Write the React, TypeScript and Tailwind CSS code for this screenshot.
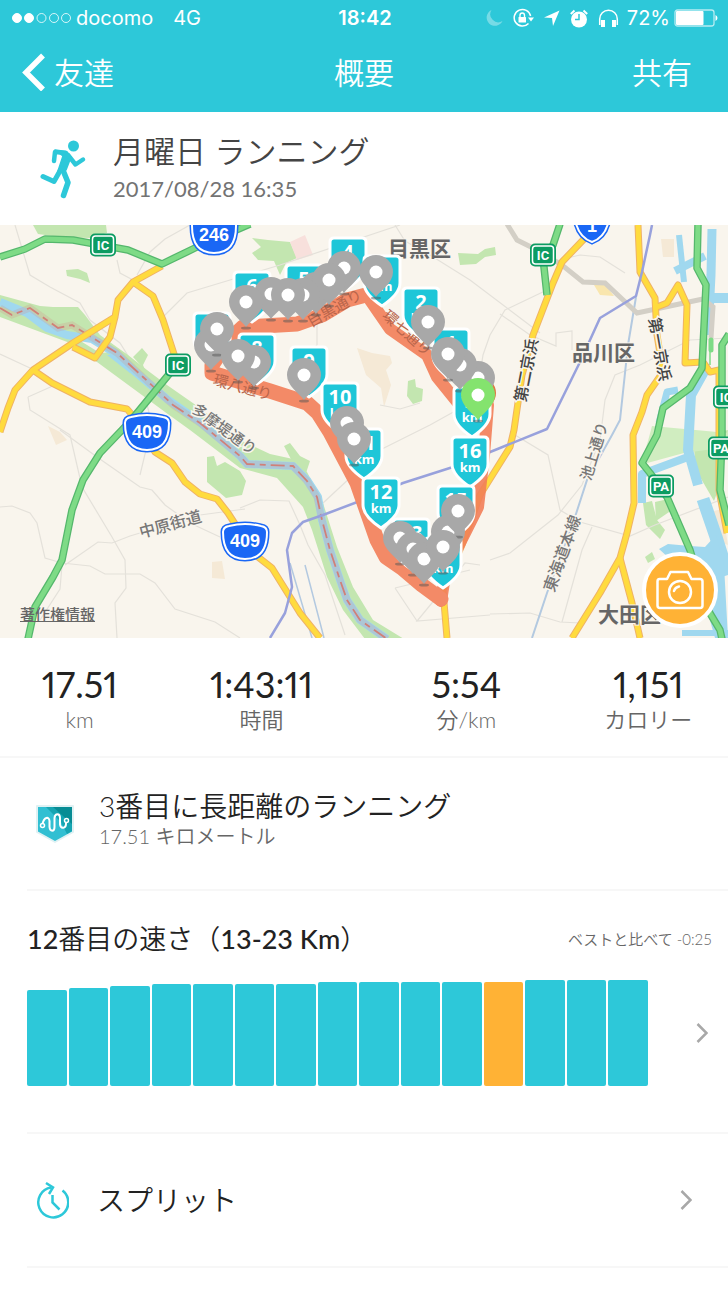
import type { ReactNode } from 'react'

interface Point {
  x: number
  y: number
}

interface KmBadge extends Point {
  km: number
}

const stats = [
  { value: '17.51', label: 'km' },
  { value: '1:43:11', label: '時間' },
  { value: '5:54', label: '分/km' },
  { value: '1,151', label: 'カロリー' },
]

// bar heights in px, the highlighted one is this run
const paceBars = [96, 98, 100, 102, 102, 102, 102, 104, 104, 104, 104, 104, 106, 106, 106]
const currentBar = 11

const kmBadges: KmBadge[] = [
  { km: 4, x: 348, y: 11 },
  { km: 3, x: 382, y: 29 },
  { km: 5, x: 304, y: 38 },
  { km: 6, x: 252, y: 45 },
  { km: 7, x: 212, y: 86 },
  { km: 8, x: 257, y: 107 },
  { km: 9, x: 309, y: 120 },
  { km: 2, x: 421, y: 61 },
  { km: 1, x: 451, y: 102 },
  { km: 17, x: 472, y: 160 },
  { km: 16, x: 470, y: 210 },
  { km: 11, x: 364, y: 202 },
  { km: 10, x: 340, y: 156 },
  { km: 12, x: 381, y: 251 },
  { km: 13, x: 411, y: 292 },
  { km: 14, x: 443, y: 311 },
  { km: 15, x: 456, y: 259 },
]

const pins: Point[] = [
  { x: 376, y: 47 },
  { x: 344, y: 43 },
  { x: 316, y: 64 },
  { x: 329, y: 55 },
  { x: 303, y: 70 },
  { x: 271, y: 69 },
  { x: 288, y: 70 },
  { x: 246, y: 77 },
  { x: 211, y: 120 },
  { x: 217, y: 104 },
  { x: 254, y: 137 },
  { x: 238, y: 131 },
  { x: 304, y: 150 },
  { x: 347, y: 198 },
  { x: 354, y: 214 },
  { x: 428, y: 97 },
  { x: 478, y: 153 },
  { x: 460, y: 140 },
  { x: 448, y: 129 },
  { x: 400, y: 313 },
  { x: 413, y: 324 },
  { x: 424, y: 334 },
  { x: 448, y: 307 },
  { x: 458, y: 286 },
  { x: 443, y: 322 },
]

const yellowRoads = [
  'M162 41 133 57 118 75 115 92 73 118 33 145 15 165 8 183 0 207',
  'M115 92 110 112 95 133 73 122',
  'M133 57 153 71 163 95 175 132',
  'M33 145 52 158 90 177 127 184 134 192 155 227 172 238 185 257 200 269 217 274 228 288 237 302 258 332 272 343 300 388 320 413',
  'M586 12 562 37 553 58 533 110 522 150 514 205 510 222 480 270 462 320 443 365 447 413',
  'M638 0 640 47 655 73 657 110 663 147 647 170 642 187 633 210 634 278 627 308 620 333 600 368 572 413',
  'M620 333 632 378 640 413',
  'M657 82 667 78 678 60 687 80 685 138 703 137 710 147 719 145 719 265 727 308',
]

const greenRoads = [
  'M0 32 25 24 45 14 73 15 128 25 162 39 197 22 250 -1',
  'M170 148 133 193 122 205 100 228 83 255 72 285 62 335 53 352 35 382 28 414',
  'M560 -1 553 20 543 33 547 70',
  'M698 -1 697 43 706 60 702 143 690 163 663 183 657 210 642 238 650 248 667 272 690 325 708 385 720 405 722 414',
  'M729 109 722 120 722 210 720 265 729 300',
]

const minorRoads = [
  'M15 0 30 50 50 62 80 78 90 95 120 118 140 150 152 200 140 250',
  'M190 0 165 14 150 27 137 50',
  'M117 35 120 48 133 55',
  'M163 92 187 68 230 55 280 40 400 0',
  'M0 129 30 143',
  'M28 172 55 160 M28 172 30 185 70 210 82 262 112 312 125 335 126 363 115 378 117 413',
  'M0 282 12 281 30 288 37 298 45 333 62 338 90 341 105 349 140 349 155 358 175 384 215 397 240 413',
  'M65 340 98 317 112 318 130 311 200 290 245 284',
  'M62 340 60 364 40 395',
  'M60 205 97 232 140 262 152 265 165 280 190 298 220 312',
  'M323 278 380 225 430 200 475 175',
  'M300 60 317 82 317 120 300 140',
  'M395 0 405 16 430 30 470 55 540 108',
  'M547 65 505 85 490 110 483 130 480 150',
  'M500 89 530 110 556 121 556 108 572 106 572 125',
  'M563 34 580 30 600 32 625 48',
  'M515 210 548 230 560 285 580 297 630 311 655 300 728 272',
  'M728 113 690 115 640 140 615 150 605 175 600 215 582 260 558 290 510 328 490 335',
  'M592 302 582 325 562 397 M490 389 530 388 560 397 580 398',
  'M380 180 400 184 420 178',
  'M480 340 465 338 417 396 490 390',
  'M395 363 417 396 M395 363 470 345',
  'M240 283 260 275 289 276 300 300 308 320 325 350 345 410',
]

const riverLine =
  'M0 77 27 88 47 103 67 110 92 114 115 128 133 145 167 174 200 197 240 231 247 239 270 240 293 241 307 255 318 272 322 295 330 325 340 355 347 375 360 395 387 414'
const borderLine =
  'M0 83 12 90 30 83 58 103 72 100 117 128 143 152 173 180 200 198 240 231 247 239 270 240 293 241 307 256 317 272 322 295 330 325 340 355 347 375 360 395 387 414'
const routeLine =
  'M366 70 347 75 322 90 297 99 243 102 228 116 212 140 212 148 270 166 307 178 318 188 330 207 357 258 377 315 386 332 402 343 422 360 441 374'
const routeBack = 'M441 376 446 345 465 308 478 282 484 230 488 180'
const routeEast = 'M370 75 390 104 427 130 437 152 458 178'

function KmMarker({ km, x, y }: KmBadge) {
  return (
    <g transform={`translate(${x} ${y})`}>
      <path
        d="M-14 2H14Q18 2 18 6V29Q18 40 0 52Q-18 40 -18 29V6Q-18 2 -14 2Z"
        fill="#1ec6d8"
        stroke="#fff"
        strokeWidth="3"
        strokeLinejoin="round"
      />
      <text y="23" textAnchor="middle" fill="#fff" className="font-['Noto_Sans',sans-serif] text-[20px] font-bold">
        {km}
      </text>
      <text y="37" textAnchor="middle" fill="#fff" className="font-['Noto_Sans',sans-serif] text-[13px] font-bold">
        km
      </text>
    </g>
  )
}

function Pin({ x, y, color = '#a8a8a8' }: Point & { color?: string }) {
  return (
    <g transform={`translate(${x} ${y})`}>
      <ellipse cy="26" rx="5" ry="1.5" fill="#555" opacity="0.5" />
      <path d="M0 25C-5 18-17 11-17 0A17 17 0 0 1 17 0C17 11 5 18 0 25Z" fill={color} />
      <circle r="6.5" fill="#fff" />
    </g>
  )
}

function ExitSign({ x, y, text }: Point & { text: string }) {
  return (
    <g transform={`translate(${x} ${y})`}>
      <rect x="-13" y="-11.5" width="26" height="23" rx="5" fill="#0c9c62" />
      <rect x="-10.5" y="-9" width="21" height="18" rx="3" fill="#0c9c62" stroke="#fff" strokeWidth="1.5" />
      <text y="5" textAnchor="middle" fill="#fff" className="font-['Roboto',sans-serif] text-[13px] font-bold">
        {text}
      </text>
    </g>
  )
}

function RouteShield({ x, y, text }: Point & { text: string }) {
  const shape = 'M-22 -10Q-22 -15 -16 -16Q0 -20 16 -16Q22 -15 22 -10Q22 17 0 17Q-22 17 -22 -10Z'
  return (
    <g transform={`translate(${x} ${y})`}>
      <path d={shape} fill="#1a67f5" stroke="#1a67f5" strokeWidth="5" />
      <path d={shape} fill="#1a67f5" stroke="#fff" strokeWidth="2" />
      <text y="5" textAnchor="middle" fill="#fff" className="font-['Liberation_Sans',sans-serif] text-[18px] font-bold">
        {text}
      </text>
    </g>
  )
}

function StreetName({ x, y, angle, size = 15, dark, children }: Point & { angle: number; size?: number; dark?: boolean; children: ReactNode }) {
  return (
    <text
      transform={`translate(${x} ${y}) rotate(${angle})`}
      textAnchor="middle"
      dominantBaseline="central"
      fontSize={size}
      fill={dark ? '#444' : '#777'}
      stroke="#f9f5ed"
      strokeWidth="3"
      paintOrder="stroke"
      className="font-medium"
    >
      {children}
    </text>
  )
}

function RouteMap() {
  return (
    <svg viewBox="0 0 728 413" className="block w-full bg-[#f9f5ed]" role="img" aria-label="ルート">
      {/* parks and blocks */}
      <g fill="#c3e6b0">
        <path d="M33 0 38 9 60 12 90 13 107 8 106 0Z" />
        <path d="M66 45 78 44 87 48 90 58 80 54 67 51Z" />
        <path d="M252 13 268 15 290 17 297 33 286 38 280 50 274 36 258 35 252 28 261 22Z" />
        <path d="M458 28 478 29 485 24 495 22 496 30 485 32 476 39 460 40Z" />
        <path d="M408 156 415 154 416 162 423 164 422 176 413 179 407 171Z" />
        <path d="M133 132 142 123 148 130 143 140 145 145Z" />
        <path d="M207 232 214 231 217 241 225 237 240 246 246 256 242 270 226 273 207 257Z" />
        <path d="M284 221 290 218 300 231 310 236 306 248 293 238Z" />
        <path d="M643 278 652 276 657 295 665 305 660 314 646 300Z" />
        <path d="M655 277 668 274 672 285 656 296Z" />
        <path d="M645 332 652 327 655 334 648 338Z" />
        <path d="M693 213 728 205 722 255 714 276 707 264 696 245Z" />
      </g>
      <path d="M652 201 728 208 728 222 684 228 640 240 648 216Z" fill="#d0edc0" />
      <g fill="#f5e9d6">
        <path d="M357 123 372 128 390 131 392 138 386 145 391 160 384 182 381 163 366 150Z" />
        <path d="M212 337 222 336 225 354 212 353Z" />
        <path d="M48 201 60 207 67 215 56 220Z" />
        <path d="M661 14H674V32H663Z" />
        <path d="M594 60 604 58 614 71 600 70Z" fill="#f9e6ae" />
        <path d="M714 286 722 284 728 320 714 315Z" />
      </g>
      <path d="M290 17 305 10 313 30 297 35Z" fill="#f8e0dc" />

      <g fill="none" stroke="#e4e1da" strokeWidth="1.2">
        {minorRoads.map((d) => (
          <path key={d} d={d} />
        ))}
      </g>

      {/* canals and the bay */}
      <g fill="none" stroke="#a0d8ef" strokeLinejoin="round">
        <path d="M679 10 684 57" strokeWidth="6" />
        <path d="M675 46 705 31" strokeWidth="8" />
        <path d="M708 110 711 50 712 4" strokeWidth="9" />
        <path d="M714 73H728" strokeWidth="10" />
        <path d="M706 143 691 170 688 225 698 260" strokeWidth="10" />
        <path d="M678 165 667 167 659 198" strokeWidth="7" />
        <path d="M688 232 642 249 642 278" strokeWidth="8" />
        <path d="M703 274 716 312 728 350" strokeWidth="13" />
      </g>
      <path d="M659 324 668 319 690 321 705 322 716 310 724 340 728 413 715 413 700 360 670 334Z" fill="#a0d8ef" />
      <path d="M682 405H728V411H682Z" fill="#a0d8ef" />

      {/* river */}
      <path
        d="M0 70 40 81 53 82 78 82 85 90 100 110 128 130 147 145 167 160 200 183 240 215 270 229 293 234 307 247 323 278 337 322 353 362 373 395 404 414 365 414 343 385 327 352 312 305 303 282 277 253 240 243 190 205 165 187 97 137 70 118 0 92Z"
        fill="#c3e6b0"
      />
      <path d="M74 112 90 114 112 127 100 128Z" fill="#f9f5ed" />
      <path d={riverLine} fill="none" stroke="#a0d8ef" strokeWidth="8" strokeLinejoin="round" />
      <path d="M107 130 120 130 137 146 130 148Z" fill="#a0d8ef" />
      <path d={borderLine} fill="none" stroke="#d58f88" strokeOpacity="0.25" strokeWidth="7" />
      <path d={borderLine} fill="none" stroke="#d08078" strokeWidth="1.8" strokeDasharray="14 5 6 5" />

      {/* railways */}
      <path d="M636 72 628 120 620 195 612 210 587 255 575 292 547 368 532 413" fill="none" stroke="#b3c9e0" strokeWidth="2" />
      <path d="M290 338 312 413M305 340 324 413" fill="none" stroke="#b3c9e0" strokeWidth="1.5" />
      <path d="M507 -1 517 15 537 25 562 40 583 57 605 58 637 88 703 74 713 82 711 113" fill="none" stroke="#d3cfc6" strokeWidth="5" />

      <g fill="none" strokeLinejoin="round">
        {yellowRoads.map((d) => (
          <path key={d} d={d} stroke="#efb266" strokeWidth="7" />
        ))}
        {yellowRoads.map((d) => (
          <path key={d} d={d} stroke="#ffdb3e" strokeWidth="5" />
        ))}
        {greenRoads.map((d) => (
          <path key={d} d={d} stroke="#55b76c" strokeWidth="7.5" />
        ))}
        {greenRoads.map((d) => (
          <path key={d} d={d} stroke="#7edb86" strokeWidth="5" />
        ))}
        <path d="M711 115V125" stroke="#7edb86" strokeWidth="5" strokeLinecap="round" />
        <path d="M710 125V140" stroke="#7edb86" strokeWidth="1.5" />
        <path
          d="M270 413 285 388 292 362 287 325 292 308 303 297 323 290 360 276 403 258 453 242 500 223 547 204 580 137 600 93 636 71 642 47 650 10 652 0"
          stroke="#98a1dc"
          strokeWidth="2.5"
        />
      </g>

      <path d={routeBack} fill="none" stroke="#f27e58" strokeOpacity="0.9" strokeWidth="12" strokeLinejoin="round" strokeLinecap="round" />
      <path d={routeLine} fill="none" stroke="#f38a67" strokeWidth="15" strokeLinejoin="round" strokeLinecap="round" />
      <path d={routeEast} fill="none" stroke="#f38a67" strokeWidth="12" strokeLinejoin="round" strokeLinecap="round" />
      <circle cx="480" cy="168" r="16" fill="#dd7a45" />

      <g fill="#b8654b" textAnchor="middle" dominantBaseline="central" fontSize="15">
        <text transform="translate(334 82) rotate(-30)">目黒通り</text>
        <text transform="translate(408 107) rotate(42)">環七通り</text>
        <text transform="translate(243 161) rotate(15)">環八通り</text>
      </g>
      <StreetName x={225} y={203} angle={36}>多摩堤通り</StreetName>
      <StreetName x={170} y={298} angle={-15} size={16}>中原街道</StreetName>
      <StreetName x={593} y={226} angle={-73}>池上通り</StreetName>
      <StreetName x={561} y={328} angle={-70} size={16}>東海道本線</StreetName>
      <StreetName x={525} y={145} angle={-79} size={16} dark>第二京浜</StreetName>
      <StreetName x={661} y={124} angle={80} size={16} dark>第一京浜</StreetName>

      <g fill="#666" stroke="#f9f5ed" strokeWidth="2" paintOrder="stroke" fontSize="21" fontWeight="700">
        <text x="388" y="31">目黒区</text>
        <text x="572" y="135">品川区</text>
        <text x="598" y="397">大田区</text>
      </g>

      <ExitSign x={103} y={20} text="IC" />
      <ExitSign x={178} y={140} text="IC" />
      <ExitSign x={543} y={30} text="IC" />
      <ExitSign x={726} y={172} text="IC" />
      <ExitSign x={721} y={223} text="PA" />
      <ExitSign x={661} y={261} text="PA" />
      <RouteShield x={214} y={11} text="246" />
      <RouteShield x={147} y={208} text="409" />
      <RouteShield x={245} y={317} text="409" />
      <g transform="translate(592 0)">
        <path d="M-17 -6Q-14 12 0 17Q14 12 17 -6Z" fill="#1a67f5" stroke="#1a67f5" strokeWidth="5" />
        <path d="M-17 -6Q-14 12 0 17Q14 12 17 -6Z" fill="#1a67f5" stroke="#fff" strokeWidth="2" />
        <text y="7" textAnchor="middle" fill="#fff" className="font-['Liberation_Sans',sans-serif] text-[18px] font-bold">
          1
        </text>
      </g>

      {kmBadges.map((badge) => (
        <KmMarker key={badge.km} {...badge} />
      ))}
      {pins.map((pin) => (
        <Pin key={`${pin.x}-${pin.y}`} {...pin} />
      ))}
      <Pin x={478} y={170} color="#84e36e" />
    </svg>
  )
}

function StatusBar() {
  return (
    <div className="grid h-9 grid-cols-[1fr_auto_1fr] items-center pr-2.5 pl-3 font-['Inter',sans-serif] text-[20px]">
      <div className="flex items-center">
        <svg width="60" height="12" viewBox="0 0 60 12" fill="none" stroke="#fff" aria-hidden="true">
          <circle cx="5" cy="6" r="4.5" fill="#fff" />
          <circle cx="17" cy="6" r="4.5" fill="#fff" />
          <circle cx="29.5" cy="6" r="4.5" strokeWidth="0.8" />
          <circle cx="42" cy="6" r="4.5" strokeWidth="0.8" />
          <circle cx="54" cy="6" r="4.5" strokeWidth="0.8" />
        </svg>
        <span className="ml-1">docomo</span>
        <span className="ml-5">4G</span>
      </div>
      <span className="font-semibold">18:42</span>
      <div className="flex items-center justify-end">
        <svg width="17" height="18" viewBox="0 0 17 18" fill="#fff" opacity="0.35" aria-hidden="true">
          <path d="M5.500 1A8.300 8.300 0 1 0 16.500 12A8 8 0 0 1 5.500 1Z" />
        </svg>
        <svg width="21" height="20" viewBox="0 0 21 20" className="ml-2.5" fill="none" aria-hidden="true">
          <path d="M17.600 8A8.300 8.300 0 1 0 15.500 15.500" stroke="#fff" strokeWidth="1.500" />
          <path d="M15 9.500H21L18 13.500Z" fill="#fff" />
          <rect x="5.500" y="9" width="7.500" height="5.500" rx="0.500" fill="#fff" />
          <path d="M7 9V7.300A2.200 2.200 0 0 1 11.500 7.300V9" stroke="#fff" strokeWidth="1.400" />
        </svg>
        <svg width="16" height="16" viewBox="0 0 16 16" className="ml-2.5" fill="#fff" aria-hidden="true">
          <path d="M15.500 0.500 9 16 8 8 0 7.500Z" />
        </svg>
        <svg width="18" height="19" viewBox="0 0 18 19" className="ml-2.5" fill="none" aria-hidden="true">
          <circle cx="9" cy="10.500" r="8" fill="#fff" />
          <path d="M9 5V10.500H5" stroke="#2dc8d9" strokeWidth="1.500" />
          <path d="M0.800 5 4.500 1.600M17.200 5 13.500 1.600" stroke="#fff" strokeWidth="2" />
        </svg>
        <svg width="21" height="19" viewBox="0 0 21 19" className="ml-2.5" fill="none" stroke="#fff" aria-hidden="true">
          <path d="M1.700 16V10A8.800 8.800 0 0 1 19.300 10V16" strokeWidth="1.500" />
          <rect x="3.500" y="11.500" width="3" height="6" fill="#fff" />
          <rect x="14.500" y="11.500" width="3" height="6" fill="#fff" />
        </svg>
        <span className="ml-2">72%</span>
        <svg width="44" height="18" viewBox="0 0 44 18" className="ml-1" fill="none" aria-hidden="true">
          <rect x="1" y="1" width="39" height="16" rx="2.500" stroke="#fff" strokeOpacity="0.65" strokeWidth="1.300" />
          <rect x="2" y="2" width="27.500" height="14" rx="1" fill="#fff" />
          <path d="M41.500 6Q43.500 7 43.500 9T41.500 12Z" fill="#fff" />
        </svg>
      </div>
    </div>
  )
}

function Chevron() {
  return (
    <svg width="12" height="22" viewBox="0 0 12 22" fill="none" className="shrink-0" aria-hidden="true">
      <path d="M1.500 2 10.500 11 1.500 20" stroke="#a8a8a8" strokeWidth="2.500" />
    </svg>
  )
}

export default function App() {
  return (
    <div className="min-h-screen bg-white font-['Lato','Noto_Sans_CJK_JP',sans-serif] text-[#222]">
      <header className="bg-[#2dc8d9] text-white">
        <StatusBar />
        <nav className="grid h-19 grid-cols-3 items-center pr-9 pb-1 pl-5 text-[30px] leading-9 font-[350]">
          <button type="button" className="flex items-center gap-2 justify-self-start">
            <svg width="26" height="38" viewBox="0 0 26 38" fill="none" aria-hidden="true">
              <path d="M23 2.500 6 19.500 23 36.500" stroke="#fff" strokeWidth="5.500" />
            </svg>
            友達
          </button>
          <h1 className="pl-4 text-center">概要</h1>
          <button type="button" className="justify-self-end">共有</button>
        </nav>
      </header>

      <section className="flex h-[113px] items-center gap-6 pl-10">
        <svg width="49" height="60" viewBox="0 0 49 60" fill="none" stroke="#2dc8d9" strokeLinecap="round" strokeLinejoin="round" aria-hidden="true">
          <circle cx="33.500" cy="7" r="5.500" fill="#2dc8d9" stroke="none" />
          <path d="M14 22 15 13 26 14" strokeWidth="4.500" />
          <path d="M15 11 26 12.500 31 18 26 31 18 32 23 17Z" fill="#2dc8d9" strokeWidth="1.500" />
          <path d="M28 16 35.500 25.500 43 20.500" strokeWidth="4.500" />
          <path d="M22.500 30 28 43.500 23.500 56.500" strokeWidth="5.500" />
          <path d="M20.500 31 14 42.500 3 37.500" strokeWidth="5" />
        </svg>
        <div>
          <h2 className="text-[31px] leading-10 font-[350] text-[#444]">月曜日 ランニング</h2>
          <p className="text-[22px] leading-9 text-[#737373]">2017/08/28 16:35</p>
        </div>
      </section>

      <section className="relative font-['Noto_Sans_CJK_JP',sans-serif]">
        <RouteMap />
        <a href="#legal" className="absolute bottom-3.5 left-5 text-[15px] leading-5 font-medium text-[#666] underline">
          著作権情報
        </a>
        <button
          type="button"
          aria-label="写真を追加"
          className="absolute right-2.5 bottom-2.5 flex size-19 items-center justify-center rounded-full border-4 border-white bg-[#ffb235]"
        >
          <svg width="48" height="40" viewBox="0 0 48 40" fill="none" stroke="#fff" strokeWidth="2.500" strokeLinejoin="round" aria-hidden="true">
            <path d="M3.500 9H11L14.500 2H32L35.500 9H44Q46.500 9 46.500 11.500V35.500Q46.500 38 44 38H4Q1.500 38 1.500 35.500V11.500Q1.500 9 3.500 9Z" />
            <circle cx="24" cy="22" r="11" />
            <path d="M18 21A6.500 6.500 0 0 1 23 16.500" strokeLinecap="round" />
          </svg>
        </button>
      </section>

      <dl className="grid h-[120px] grid-cols-[7fr_9fr_9fr_7fr] border-b-2 border-[#f7f7f7] pt-6 text-center">
        {stats.map((stat) => (
          <div key={stat.label} className="flex flex-col-reverse justify-end">
            <dt className="text-[22px] leading-7 font-[350] text-[#666]">{stat.label}</dt>
            <dd className="text-[36px] leading-11 proportional-nums [font-kerning:none]">{stat.value}</dd>
          </div>
        ))}
      </dl>

      <section className="ml-[27px] flex h-[133px] items-center gap-6 border-b-2 border-[#f7f7f7] pl-2">
        <svg width="40" height="40" viewBox="0 0 40 40" fill="none" aria-hidden="true">
          <path d="M2 2H38V28L20 38 2 28Z" fill="#31bfd2" stroke="#dff1f3" strokeWidth="2" strokeLinejoin="round" />
          <path d="M11 3H37V27L32 30 26 18Z" fill="#16a5b2" />
          <path d="M18 3H37V20Z" fill="#078c94" />
          <path
            d="M7.500 20C9 13 14 12 14.500 17V23C15 28 19.500 28 19.500 23V14C20 9 25 9 25 14V20.500C25.500 25 31 25 31 19.500V18"
            stroke="#fff"
            strokeWidth="2"
          />
          <circle cx="7.500" cy="21.500" r="2" stroke="#fff" strokeWidth="1.500" />
          <circle cx="31.500" cy="16.500" r="2" stroke="#fff" strokeWidth="1.500" />
        </svg>
        <div className="pb-2">
          <h3 className="text-[28px] leading-8 font-[350]">3番目に長距離のランニング</h3>
          <p className="text-[20px] leading-7 font-[350] text-[#666]">17.51 キロメートル</p>
        </div>
      </section>

      <section className="ml-[27px] h-[243px] border-b-2 border-[#f7f7f7] pt-7">
        <div className="flex items-center justify-between pr-4">
          <h3 className="text-[27px] leading-10 font-[350]">
            <span className="font-medium">12</span>番目の速さ（<span className="font-medium">13-23 Km</span>）
          </h3>
          <span className="text-[15px] font-[350] text-[#666]">ベストと比べて -0:25</span>
        </div>
        <div className="mt-[21px] flex items-center pr-5">
          <div className="flex h-[106px] flex-1 items-end gap-0.5">
            {paceBars.map((height, i) => (
              <div
                key={i}
                className={i === currentBar ? 'flex-1 rounded-xs bg-[#ffb235]' : 'flex-1 rounded-xs bg-[#2dc8d9]'}
                style={{ height }}
              />
            ))}
          </div>
          <button type="button" aria-label="ペースの詳細" className="pl-12">
            <Chevron />
          </button>
        </div>
      </section>

      <div className="ml-[27px] border-b-2 border-[#f7f7f7]">
        <button type="button" className="flex h-[132px] w-full items-center gap-7 pr-9 pl-2 text-left">
          <svg width="34" height="38" viewBox="0 0 34 38" fill="none" stroke="#2dc8d9" strokeWidth="2.500" aria-hidden="true">
            <path d="M27.500 9.500A15 15 0 1 1 16 6.500" />
            <path d="M11 2 18 6.500 14 13" />
            <path d="M17.500 14V21.500L24.500 28.500" />
          </svg>
          <span className="flex-1 text-[28px] leading-10 font-[350]">スプリット</span>
          <Chevron />
        </button>
      </div>
    </div>
  )
}
